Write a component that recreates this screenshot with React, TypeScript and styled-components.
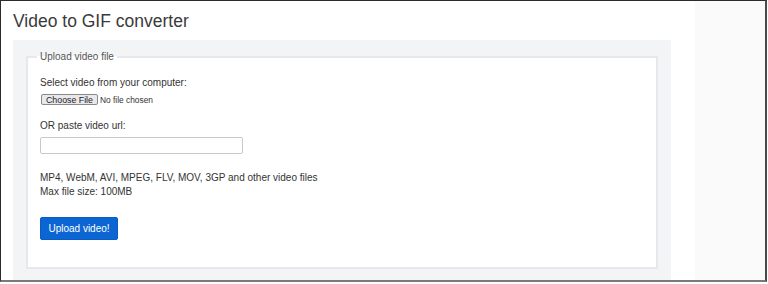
import React from 'react';
import styled, { createGlobalStyle } from 'styled-components';

const GlobalStyle = createGlobalStyle`
  html, body {
    margin: 0;
    padding: 0;
    background: #ffffff;
  }
  body {
    font-family: 'Liberation Sans', Arial, sans-serif;
    color: #333333;
  }
`;

const Window = styled.div`
  box-sizing: border-box;
  width: 767px;
  height: 282px;
  display: flex;
  border-top: 1px solid #2b2b2b;
  border-left: 1px solid #2b2b2b;
  border-right: 2px solid #4a4a4a;
  border-bottom: 2px solid #7a7a7a;
  overflow: hidden;
`;

const Main = styled.main`
  width: 694px;
  display: flex;
  flex-direction: column;
  padding-left: 12px;
  box-sizing: border-box;
`;

const Sidebar = styled.aside`
  flex: 1;
  background: #fafafa;
`;

const Title = styled.h1`
  margin: 10px 0 9px;
  font-size: 17.5px;
  line-height: 20px;
  font-weight: normal;
  color: #3a3a3a;
`;

const Panel = styled.section`
  width: 658px;
  flex: 1;
  box-sizing: border-box;
  background: #f3f4f6;
  padding: 11px 13px 13px;
`;

const Fieldset = styled.fieldset`
  margin: 0;
  background: #ffffff;
  border: 2px solid #e6e8eb;
  padding: 14px 12px 27px;
  display: flex;
  flex-direction: column;
  align-items: flex-start;
`;

const Legend = styled.legend`
  font-size: 10px;
  line-height: 12px;
  color: #555555;
  padding: 0 3px;
  margin-left: -3px;
`;

const Label = styled.label<{ $gap?: number }>`
  display: block;
  font-size: 10px;
  line-height: 12px;
  color: #333333;
  margin-top: ${p => p.$gap ?? 0}px;
`;

const FileInput = styled.input`
  margin: 5px 0 0 1px;
  font-family: 'Liberation Sans', Arial, sans-serif;
  font-size: 8.4px;
  line-height: 12px;
  color: #333333;

  &::file-selector-button {
    font-family: 'Liberation Sans', Arial, sans-serif;
    font-size: 8.8px;
    height: 11px;
    padding: 0 4px;
    margin-right: 2px;
    background: #e9e9ed;
    border: 1px solid #8a8a8a;
    border-radius: 2px;
    color: #222222;
  }
`;

const UrlInput = styled.input`
  box-sizing: border-box;
  width: 203px;
  height: 17px;
  margin-top: 5px;
  border: 1px solid #c9c9c9;
  border-radius: 2px;
  background: #ffffff;
  font-family: 'Liberation Sans', Arial, sans-serif;
  font-size: 10px;
  padding: 0 4px;
`;

const Note = styled.p<{ $gap?: number }>`
  margin: ${p => p.$gap ?? 0}px 0 0;
  font-size: 10px;
  line-height: 14px;
  color: #333333;
`;

const UploadButton = styled.button`
  margin-top: 18px;
  width: 78px;
  height: 23px;
  background: #0b66d3;
  border: 1px solid #0a5dc0;
  border-radius: 2px;
  color: #ffffff;
  font-family: 'Liberation Sans', Arial, sans-serif;
  font-size: 10px;
  padding: 0;
  cursor: pointer;
`;

export default function App() {
  return (
    <>
      <GlobalStyle />
      <Window>
        <Main>
          <Title>Video to GIF converter</Title>
          <Panel>
            <Fieldset>
              <Legend>Upload video file</Legend>
              <Label htmlFor="file">Select video from your computer:</Label>
              <FileInput id="file" type="file" accept="video/*" />
              <Label htmlFor="url" $gap={14}>OR paste video url:</Label>
              <UrlInput id="url" type="text" />
              <Note $gap={17}>
                MP4, WebM, AVI, MPEG, FLV, MOV, 3GP and other video files
                <br />
                Max file size: 100MB
              </Note>
              <UploadButton type="button">Upload video!</UploadButton>
            </Fieldset>
          </Panel>
        </Main>
        <Sidebar />
      </Window>
    </>
  );
}
